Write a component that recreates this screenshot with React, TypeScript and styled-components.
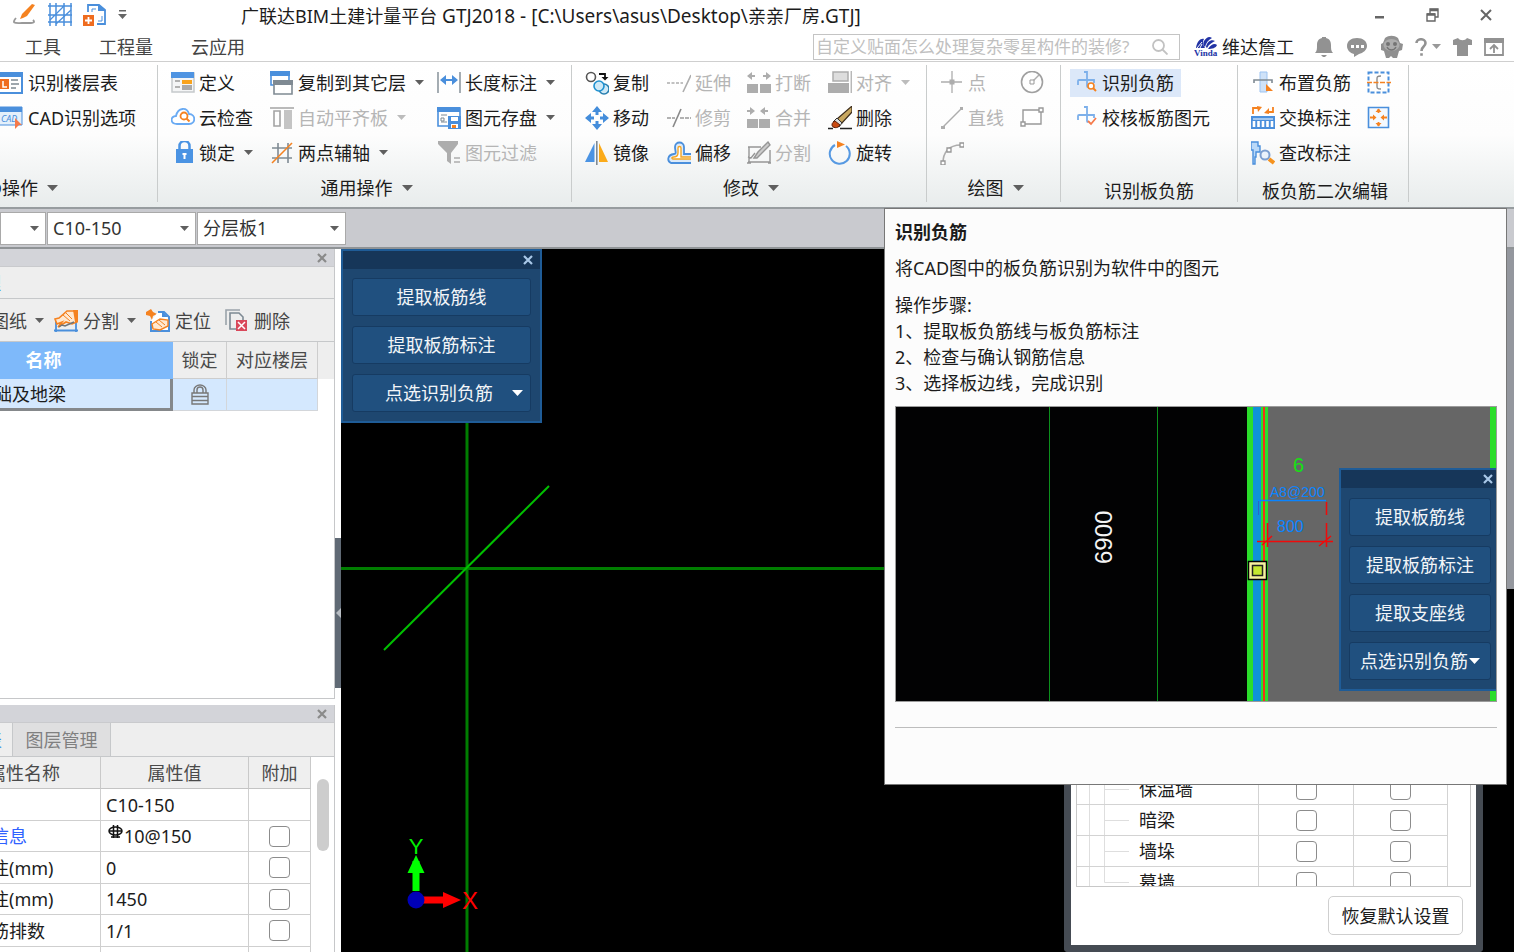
import React from 'react';
import styled, { createGlobalStyle, css } from 'styled-components';

const Global = createGlobalStyle`
  *, *::before, *::after { box-sizing: border-box; }
  body { margin: 0; background: #fff; }
  body, button, input, select, table {
    font-family: "Noto Sans", "Noto Sans CJK SC", sans-serif;
    font-size: 18px;
    line-height: 26px;
    color: #1c1c1c;
  }
  button { margin: 0; padding: 0; border: 0; background: none; white-space: nowrap; }
  svg { display: block; flex: none; }
`;

/* ---------- shared parts ---------- */

const Page = styled.div`
  position: relative;
  display: flex;
  flex-direction: column;
  height: 100vh;
  overflow: hidden;
`;

const CaretShape = styled.svg<{ $tone?: string }>`
  fill: ${p => p.$tone || '#5f5f5f'};
`;

const Caret = ({ tone, size = 9 }: { tone?: string; size?: number }) => (
  <CaretShape $tone={tone} width={size} height={size === 9 ? 5 : 6} viewBox="0 0 10 6" preserveAspectRatio="none">
    <path d="M0 0h10L5 6z" />
  </CaretShape>
);

const Checkbox = styled.input.attrs({ type: 'checkbox' })`
  appearance: none;
  display: block;
  width: 21px;
  height: 21px;
  margin: 0 auto;
  border: 1px solid #8c8c8c;
  border-radius: 4px;
  background: #fff;
`;

const Cross = ({ color = '#8a8a8a', size = 10 }: { color?: string; size?: number }) => (
  <svg width={size} height={size} viewBox="0 0 10 10" stroke={color} strokeWidth="2.2">
    <path d="M1 1l8 8M9 1L1 9" />
  </svg>
);

/* ---------- title bar ---------- */

const TitleBar = styled.header`
  display: flex;
  align-items: center;
  flex: none;
  height: 32px;
  padding: 0 22px 3px 0;
`;

const QuickAccess = styled.div`
  display: flex;
  align-items: center;
  gap: 11px;
  width: 241px;
  padding-left: 13px;
`;

const Title = styled.h1`
  margin: 2px 0 0;
  font-size: 18px;
  font-weight: 400;
  white-space: nowrap;
`;

const PathText = styled.span`
  font-size: 19px;
`;

const WindowButtons = styled.div`
  display: flex;
  align-items: center;
  gap: 41px;
  margin-left: auto;
`;

const MenuBar = styled.nav`
  display: flex;
  align-items: center;
  flex: none;
  height: 29px;
  padding: 0 10px 0 25px;
`;

const MenuLink = styled.a`
  margin-right: 38px;
  color: #444;
  text-decoration: none;
  white-space: nowrap;
`;

const SearchBox = styled.label`
  display: flex;
  align-items: center;
  width: 367px;
  height: 26px;
  margin-left: auto;
  padding: 0 11px 0 2px;
  border: 1px solid #c4c4c4;
`;

const SearchInput = styled.input`
  flex: 1;
  min-width: 0;
  padding: 0;
  border: 0;
  outline: 0;
  background: none;
  font-size: 17px;
  line-height: 22px;
  &::placeholder { color: #c0c0c0; opacity: 1; }
`;

const Account = styled.button`
  display: flex;
  align-items: center;
  gap: 4px;
  margin: 0 20px 0 14px;
`;

const StatusIcons = styled.div`
  display: flex;
  align-items: center;
  gap: 12px;
`;

const HelpButton = styled.button`
  display: flex;
  align-items: center;
  gap: 5px;
`;

/* ---------- ribbon ---------- */

const Ribbon = styled.section`
  display: flex;
  flex: none;
  height: 148px;
  padding-top: 3px;
  border-top: 1px solid #cfcfcf;
  border-bottom: 2px solid #979c9f;
  background: linear-gradient(#fff 0%, #fdfdfd 50%, #e8ecec 100%);
`;

const Group = styled.div<{ $inset?: number }>`
  display: flex;
  flex-direction: column;
  flex: none;
  margin-bottom: 5px;
  padding-left: ${p => p.$inset || 0}px;
  border-right: 1px solid #c9cccc;
  overflow: hidden;
`;

const Columns = styled.div`
  display: flex;
`;

const Column = styled.div<{ $width: number }>`
  width: ${p => p.$width}px;
  display: flex;
  flex-direction: column;
  align-items: flex-start;
`;

const Cell = styled.div`
  display: flex;
  align-items: center;
  height: 35px;
`;

const ToolButton = styled.button<{ $active?: boolean; $pad?: boolean }>`
  display: flex;
  align-items: center;
  gap: 4px;
  height: 28px;
  ${p => p.$pad && css`padding: 0 7px 0 4px;`}
  background: ${p => (p.$active ? '#dce8f9' : 'none')};
  &:disabled { color: #b5b5b5; }
  & > ${CaretShape} { margin-left: 5px; }
`;

const GroupLabel = styled.div<{ $low?: boolean; $start?: boolean }>`
  display: flex;
  align-items: center;
  justify-content: ${p => (p.$start ? 'flex-end' : 'center')};
  gap: 9px;
  width: 0;
  min-width: 100%;
  margin-top: ${p => (p.$low ? 8 : 5)}px;
  padding-right: ${p => (p.$start ? 99 : 9)}px;
  height: 26px;
  white-space: nowrap;
`;

/* ---------- component selector strip ---------- */

const SelectorStrip = styled.div`
  display: flex;
  align-items: center;
  gap: 1px;
  flex: none;
  height: 40px;
  border-bottom: 2px solid #8f9396;
  background: #c9cacf;
`;

const Combo = styled.label<{ $width: number }>`
  display: grid;
  grid-template-columns: 1fr 15px;
  align-items: center;
  width: ${p => p.$width}px;
  height: 33px;
  border: 1px solid #a9a9a9;
  background: #fff;
`;

const ComboSelect = styled.select`
  grid-area: 1 / 1 / 2 / 3;
  appearance: none;
  width: 100%;
  height: 31px;
  padding: 0 20px 0 5px;
  border: 0;
  background: none;
  color: #333;
`;

const ComboCaret = styled.span`
  grid-area: 1 / 2 / 2 / 3;
  pointer-events: none;
`;

/* ---------- workspace and docks ---------- */

const Workspace = styled.main`
  display: flex;
  flex: 1;
  min-height: 0;
`;

const Dock = styled.aside`
  display: flex;
  flex-direction: column;
  align-items: flex-end;
  gap: 6px;
  flex: none;
  width: 335px;
  overflow: hidden;
`;

const Panel = styled.section<{ $height?: number }>`
  display: flex;
  flex-direction: column;
  width: 420px;
  ${p => (p.$height ? css`flex: none; height: ${p.$height}px; border-bottom: 1px solid #c6c7c9;` : css`flex: 1; min-height: 0; overflow: hidden;`)}
  border-right: 1px solid #c6c7c9;
`;

const PanelBar = styled.div`
  display: flex;
  align-items: center;
  justify-content: flex-end;
  flex: none;
  height: 18px;
  padding-right: 7px;
  background: #d3d4d9;
  border-bottom: 1px solid #c9cacd;
`;

const TabRow = styled.div<{ $height: number }>`
  display: flex;
  flex: none;
  height: ${p => p.$height}px;
  background: #eee;
  border-bottom: 1px solid #c6c8ca;
`;

const Tab = styled.button<{ $on?: boolean; $width: number }>`
  width: ${p => p.$width}px;
  padding: ${p => (p.$on ? '0 10px 0 0' : '0')};
  text-align: ${p => (p.$on ? 'right' : 'center')};
  color: ${p => (p.$on ? '#3a8ee8' : '#808080')};
  background: ${p => (p.$on ? '#eee' : '#dfdfe0')};
  border-right: 1px solid #c6c8ca;
`;

const HeadTab = styled(Tab)`
  border-right: 0;
  padding-right: 0;
`;

const DrawingTools = styled.div`
  display: flex;
  align-items: center;
  flex: none;
  height: 43px;
  padding: 1px 0 0 76px;
  background: #eee;
  border-bottom: 1px solid #c6c8ca;
`;

const DrawingTool = styled.button<{ $after: number }>`
  display: flex;
  align-items: center;
  gap: 5px;
  margin-right: ${p => p.$after}px;
  color: #444;
  & > ${CaretShape} { margin-left: 3px; }
`;

const DataTable = styled.table`
  border-collapse: separate;
  border-spacing: 0;
  table-layout: fixed;
  th, td { padding: 0; white-space: nowrap; overflow: hidden; }
`;

const DrawingTable = styled(DataTable)`
  width: 419px;
  th {
    height: 37px;
    font-weight: 400;
    color: #4a4a4a;
    background: #eee;
    border-right: 1px solid #cdcdcd;
    border-bottom: 1px solid #cdcdcd;
  }
  th:first-child { background: #7eb9fa; color: #fff; font-weight: 700; border-color: #7eb9fa; }
  th:last-child { border: 0; }
  td { height: 32px; background: #d4e8fe; border-right: 1px solid #d3d6da; border-bottom: 1px solid #d3d6da; }
  td:first-child { padding-left: 61px; border-right: 3px solid #85888b; border-bottom: 3px solid #85888b; }
  td:last-child { background: #fff; border: 0; }
  td svg { margin: 0 auto; }
`;

const PropertyArea = styled.div`
  display: flex;
  flex: 1;
  min-height: 0;
`;

const PropertyTable = styled(DataTable)`
  width: 396px;
  align-self: flex-start;
  th {
    height: 32px;
    font-weight: 400;
    color: #4a4a4a;
    background: #efefef;
    border-right: 1px solid #c9c9c9;
    border-bottom: 1px solid #c4c4c4;
  }
  td { height: 32px; border-right: 1px solid #cfcfcf; border-bottom: 1px solid #cfcfcf; }
  tr:nth-child(even) td { height: 31px; }
  td:nth-child(2) { padding-left: 7px; }
  td:nth-child(3) { padding-left: 5px; }
`;

const Linked = styled.span`
  color: #2f62ff;
`;

const Rebar = styled.span`
  display: flex;
  align-items: flex-start;
  gap: 1px;
  height: 26px;
  padding-left: 2px;
`;

const ScrollThumb = styled.div`
  width: 12px;
  height: 72px;
  margin: 22px 0 0 6px;
  border-radius: 6px;
  background: #cdcdcd;
`;

const Gutter = styled.div`
  flex: none;
  width: 6px;
  padding-top: 289px;
`;

const CollapseHandle = styled.button`
  display: flex;
  align-items: center;
  justify-content: flex-end;
  width: 6px;
  height: 150px;
  background: #606a75;
`;

/* ---------- drawing canvas ---------- */

const Canvas = styled.div`
  position: relative;
  flex: 1;
  min-width: 0;
  background: #000;
  overflow: hidden;
`;

const Scene = styled.svg`
  width: 100%;
  height: 100%;
`;

const CommandPalette = styled.div<{ $docked?: boolean }>`
  position: absolute;
  ${p => (p.$docked
    ? css`top: 61px; right: 0; width: 157px;`
    : css`top: 0; left: 0; width: 201px;`)}
  border: 2px solid #1f5c97;
  ${p => p.$docked && css`border-right: 0;`}
  background: #1e4770;
`;

const PaletteBar = styled.div<{ $docked?: boolean }>`
  display: flex;
  align-items: center;
  justify-content: flex-end;
  height: 18px;
  padding-right: ${p => (p.$docked ? 3 : 7)}px;
  background: #163659;
`;

const PaletteList = styled.div<{ $docked?: boolean }>`
  display: flex;
  flex-direction: column;
  gap: 10px;
  padding: ${p => (p.$docked ? '10px 5px 9px 8px' : '9px')};
`;

const PaletteButton = styled.button<{ $gap: number }>`
  display: flex;
  align-items: center;
  justify-content: center;
  gap: ${p => p.$gap}px;
  height: 38px;
  border: 1px solid #163b62;
  border-radius: 3px;
  background: #20507f;
  color: #f2f5f8;
`;

const SideStrip = styled.div`
  position: absolute;
  top: 0;
  right: 0;
  width: 8px;
  height: 340px;
  background: #94979e;
`;

const OptionsDialog = styled.section`
  position: absolute;
  right: 31px;
  bottom: 0;
  width: 419px;
  padding: 5px;
  border: 7px solid #454b53;
  border-top: 0;
  border-radius: 0 0 4px 4px;
  background: #fff;
`;

const OptionsList = styled.div`
  width: 395px;
  height: 113px;
  border: 1px solid #c8c8c8;
  border-top: 0;
  overflow: hidden;
`;

const OptionsTable = styled(DataTable)`
  width: 371px;
  td { height: 31px; border-right: 1px solid #d3d3d3; border-bottom: 1px solid #d3d3d3; }
`;

const TreeName = styled.div`
  display: flex;
  align-items: center;
  gap: 10px;
  height: 30px;
  padding-left: 12px;
`;

const DialogActions = styled.div`
  display: flex;
  justify-content: flex-end;
  padding: 9px 8px 5px 0;
`;

const PlainButton = styled.button`
  width: 135px;
  height: 39px;
  border: 1px solid #cfcfcf;
  border-radius: 5px;
  background: #fff;
`;

/* ---------- ribbon tooltip ---------- */

const Tooltip = styled.aside`
  position: absolute;
  z-index: 5;
  top: 208px;
  right: 7px;
  width: 623px;
  height: 577px;
  padding: 10px 9px 0 10px;
  border: 1px solid #777;
  background: #fcfcfc;
`;

const TipTitle = styled.h2`
  margin: 0 0 10px;
  font-size: 18px;
  line-height: 26px;
`;

const TipText = styled.p`
  margin: 0 0 11px;
`;

const Steps = styled.div`
  margin-bottom: 10px;
`;

const Preview = styled.div`
  position: relative;
  height: 296px;
  border: 1px solid #9b9b9b;
`;

const TipRule = styled.hr`
  margin: 25px 0 0;
  border: 0;
  border-top: 1px solid #bdbdbd;
`;

/* ---------- icons ---------- */

const B = '#4a8fdc';
const O = '#f58220';
const G = '#7f8a93';
const D = '#adadad';

const glyphs: Record<string, React.ReactNode> = {
  floor: <><path d="M-2 2h24v20H-2z" fill="#fff" stroke={B} strokeWidth="2" /><path d="M-2 2h25v4H-2z" fill={B} /><path d="M-2 8h11v10H-2z" fill="#ef6c1f" /><path d="M3 10v6h4" stroke="#fff" strokeWidth="1.5" fill="none" /><path d="M11 9h7M11 13h8M11 17h5" stroke={G} strokeWidth="1.5" /></>,
  cad: <><path d="M-1 1h23v18H-1z" fill="#e4f0fb" stroke={B} /><path d="M-1 1h23v5H-1z" fill={B} /><text x="1" y="16" fontSize="9" fontStyle="italic" fill={B}>CAD</text><path d="M15 12l7 7h-3l-4 4z" fill="#f57a4b" /></>,
  define: <><path d="M1 2h22v19H1z" fill="#f4f5f6" stroke="#c5c9cc" strokeWidth="1.5" /><path d="M0 1h23v6H0z" fill="#4f94e2" /><path d="M4 10h5M4 16h5" stroke="#9b9b9b" strokeWidth="1.3" /><path d="M11 9h10v4H11z" fill="#f9a31c" /><path d="M11 14h10v5H11z" fill="#aaa" /></>,
  cloud: <><path d="M6 18C-1 18-1 10 5 10 7 1 16 1 18 8c7 0 7 10 0 10z" fill="#fff" stroke="#69aaf3" strokeWidth="1.8" /><circle cx="13" cy="10" r="3.5" fill="none" stroke={O} strokeWidth="1.8" /><path d="M15.500 12.500l3 3" stroke={O} strokeWidth="2" /></>,
  lock: <><path d="M9 10V7a5 5 0 0 1 10 0v3" transform="translate(-.5 -2)" fill="none" stroke="#4a93e3" strokeWidth="2.500" /><path d="M5 8h17v14H5z" fill="#4a93e3" /><path d="M13.500 12v6M11.500 13h4" stroke="#fff" strokeWidth="2" /></>,
  copyfloor: <><path d="M1 1h18v13H1z" fill="#fff" stroke={B} strokeWidth="1.6" /><path d="M0 0h20v5H0z" fill={B} /><path d="M4 10h18v13H4z" fill="#fff" stroke={G} strokeWidth="1.6" /><path d="M3 9h20v5H3z" fill={G} /></>,
  slab: <><path d="M0 2h24" stroke="#a3a3a3" strokeWidth="1.5" /><path d="M4 5h6v15H4z" fill="none" stroke="#a3a3a3" strokeWidth="1.6" /><path d="M14 4h8v19h-8z" fill="#c4c4c4" /></>,
  axis: <><path d="M8 2v20M18 2v20M2 7h20M2 17h20" stroke={G} strokeWidth="1.6" /><path d="M2 22L22 2" stroke={O} strokeWidth="1.6" /></>,
  length: <><path d="M1 1v21M23 1v21" stroke={G} strokeWidth="1.4" /><path d="M5 9h14" stroke={B} strokeWidth="2" /><path d="M3 9l6-5v10zM21 9l-6-5v10z" fill={B} /></>,
  store: <><path d="M1 2h22v18H1z" fill="#fff" stroke={B} strokeWidth="1.6" /><path d="M0 1h23v5H0z" fill={B} /><path d="M4 9h6M4 16h6M4 12h3v3H4z" stroke={G} fill="none" /><path d="M11 10h13v13H11z" fill={B} /><path d="M14 11h7v4h-7z" fill="#fff" /><path d="M14 18h7v4h-7z" fill="#fff" /><path d="M15 19h4v3h-4z" fill={O} /></>,
  filter: <><path d="M1 0h20v3l-7 9v11l-4-3v-8L1 3z" fill={D} /><path d="M17 17h6M17 21h6" stroke={D} strokeWidth="1.5" /></>,
  copy: <><circle cx="6" cy="6" r="4.500" fill="#fff" stroke="#555" strokeWidth="1.6" /><path d="M14 3h6v4" stroke="#111" strokeWidth="1.8" fill="none" /><path d="M16.500 6h7L20 9.500z" fill="#111" /><circle cx="19" cy="18" r="5" fill="#cfe9f6" stroke="#287fb0" strokeWidth="1.6" /><circle cx="14" cy="15" r="5" fill="#cfe9f6" stroke="#1f91d0" strokeWidth="1.6" /></>,
  move: <g fill="#448ddb"><path d="M12 0l5 6h-3.500v3h-3V6H7zM12 24l5-6h-3.500v-3h-3v3H7zM0 12l6-5v3.500h3v3H6V17zM24 12l-6-5v3.500h-3v3h3V17z" /></g>,
  mirror: <><path d="M9.500 2v19H0z" fill="#4a93e3" /><path d="M14 2v19h9z" fill="#fbab1a" /><path d="M11.800 0v24" stroke={G} strokeWidth="1.6" /></>,
  extend: <><path d="M0 12h16" stroke={D} strokeWidth="1.6" strokeDasharray="3 1.500" /><path d="M24 4l-8 17" stroke={D} strokeWidth="1.6" /></>,
  trim: <><path d="M0 12h8M13 12h11" stroke="#999" strokeWidth="1.6" strokeDasharray="4 1" /><path d="M14 3L6 21" stroke="#888" strokeWidth="1.6" /></>,
  offset: <><path d="M24 22H4c-4-2-4-8 3-9 3 0 1-3 1-7 0-6 9-6 9 0v7h7" fill="#dceaf9" stroke={B} strokeWidth="1.8" /><path d="M24 18H6c-2-1-1-2 1-2 5 0 4-5 4-9 0-2 3-2 3 0v9h10" fill="#fff" stroke="#f5a623" strokeWidth="1.4" /></>,
  breakup: <g fill={D}><path d="M0 13h11v9H0zM13 13h11v9H13zM0 5l5-4v3h3v2H5v3zM24 5l-5-4v3h-3v2h3v3z" /></g>,
  merge: <g fill={D}><path d="M0 13h11v9H0zM12 13h11v9H12zM8 5L3 1v3H0v2h3v3zM13 5l5-4v3h3v2h-3v3z" /></g>,
  split: <g stroke="#969696" strokeWidth="1.4" fill="none"><path d="M1 21h22V9M1 6h13M2 6v15M1 16l3 1 4-5M0 22h4M21 22h3" /><path d="M7 17l4-6L21 1l2 3-10 10-3 3z" fill="#ccc" /></g>,
  align: <><path d="M5 1h15v9H5z" fill="#ddd" stroke={D} strokeWidth="1.5" /><path d="M0 12h21v10H0z" fill={D} /><path d="M23.200 0v22" stroke="#999" /></>,
  erase: <><path d="M0 22.500h5M12 22.500h12" stroke="#222" strokeWidth="1.6" /><path d="M24 0v6L14 17l-5-4z" fill="#c9a860" stroke="#3c2c1c" strokeWidth="1.2" /><path d="M9 12l5 5-3 4-6-5z" fill="#ddd" stroke="#333" /><path d="M7 15l5 4c-2 4-8 3-8 0 0-2 1-3 3-4z" fill="#c94a12" stroke="#5b1e08" /></>,
  rotate: <><path d="M7 4a10 10 0 1 0 11 1" fill="none" stroke="#5699e2" strokeWidth="2" /><path d="M9 0l8 3.500L9 7z" fill={O} /></>,
  point: <><path d="M12 0v22M1 11h21" stroke={D} strokeWidth="1.3" /><path d="M9.500 8.500h5v5h-5z" fill={D} /></>,
  line: <><path d="M3 21L21 3" stroke={D} strokeWidth="1.4" /><path d="M1 20h4v3H1zM20 1h3v3h-3z" fill={D} /></>,
  arc: <><path d="M3 22C3 12 8 4 21 4" fill="none" stroke={D} strokeWidth="1.6" /><g fill="#fff" stroke="#969696" strokeWidth="1.3"><path d="M1 20h4v4H1zM7 7h4v4H7zM20 2h4v4h-4z" /></g></>,
  circle: <><circle cx="12" cy="11" r="10.500" fill="none" stroke="#a0a0a0" strokeWidth="1.6" /><path d="M12 11l7-7" stroke={D} strokeWidth="1.4" /><path d="M10 9h4v4h-4z" fill="#fff" stroke="#999" /></>,
  rect: <g fill="#fff" stroke="#999" strokeWidth="1.4"><path d="M3 4h18v14H3z" /><path d="M1 16h4v4H1zM19 2h4v4h-4z" /></g>,
  identify: <><path d="M4 14v-4q0-1 1-1h15v3M10 1h3v14q0 1 1 1h2" fill="none" stroke="#7db0ea" strokeWidth="1.8" /><circle cx="17" cy="15" r="3" fill="#fff" stroke={O} strokeWidth="1.6" /><path d="M19 17l3 3" stroke={O} strokeWidth="2" /></>,
  check: <><path d="M4 14v-4q0-1 1-1h15v3M10 1h3v14q0 1 1 1" fill="none" stroke="#7db0ea" strokeWidth="1.8" /><path d="M14 15l3 3 5-6" fill="none" stroke="#f57a4b" strokeWidth="1.8" /></>,
  place: <><path d="M9 1h7v20H9z" fill="#cfe2f8" stroke="#9cc3f1" /><path d="M3 12V9h18v3" fill="none" stroke={G} strokeWidth="1.6" /><path d="M15 13l7 7h-7z" fill={O} /></>,
  swap: <><path d="M0 10h24v13H0z" fill={B} /><path d="M2 13h20" stroke="#fff" strokeWidth="1" /><path d="M3 15v6M7.500 15v6M12 15v6M16.500 15v6M21 15v6" stroke="#fff" strokeWidth="2.600" /><path d="M2 8V2h5M22 1v5h-5" fill="none" stroke={O} strokeWidth="1.8" /><path d="M6 0l5 1-4 5zM18 2v6l-5-1z" fill={O} /></>,
  inspect: <><path d="M0 1h7v4h2v6H5v5H4v7H2V9H0z" fill="#b9d8f8" stroke={B} strokeWidth="1.4" /><circle cx="14" cy="14" r="4.500" fill="#eaf2fc" stroke="#7d9fd0" strokeWidth="2" /><path d="M18 18l5 4" stroke="#f5921e" strokeWidth="4" /></>,
  bar: <><path d="M1.500 1.500h20v20h-20z" fill="none" stroke={B} strokeWidth="2" strokeDasharray="4 2" /><path d="M14 5c-4 0-4 1-4 3v7c0 2 0 3 4 3" fill="none" stroke="#8c8c8c" strokeWidth="1.4" /><path d="M0 11.500h24" stroke={O} strokeWidth="1.6" strokeDasharray="5 1.500" /></>,
  expand: <><path d="M1.500 1.500h20v20h-20z" fill="#f4f9ff" stroke={B} strokeWidth="1.600" /><path d="M11.500 3v4M11.500 16v4M3 11.500h4M16 11.500h4" stroke={O} strokeWidth="1.800" /><path d="M11.500 2.500l3 3.500h-6zM11.500 20.500l3-3.500h-6zM6 8.500v6l3.500-3zM17 8.500v6l-3.500-3z" fill={O} /></>,
  sheetsplit: <><path d="M2 11v12M0 21.500h24M22 11v12" stroke={B} strokeWidth="1.800" fill="none" /><path d="M1 10l4-1 8-7h10v11l-5 2-6-2-8 5 4-5-5 2z" fill="#ffe9d2" stroke={O} strokeWidth="1.6" /><path d="M19 1h5v12h-3z" fill={O} /><path d="M9 6l7 6M12 4l6 6" stroke={O} /><path d="M5 18l3-2 3 1 9-4" stroke="#6d757b" strokeWidth="1.400" fill="none" /></>,
  locate: <><path d="M0 3l5-3 2 3 4 2-4 2-1 4-2-4-4-1z" fill={O} /><path d="M12 3h6l5 5v14H5V12" fill="#fff" stroke={B} strokeWidth="2" /><path d="M16 2l6 6h-6z" fill={B} /><path d="M6 15l8-5 8 1v6l-8 4-7-1z" fill="#ffe9d2" stroke={O} strokeWidth="1.4" /><path d="M10 13l6 5M13 11l6 5" stroke={O} /></>,
  remove: <><path d="M1 16V1h14" fill="none" stroke="#9aa3aa" strokeWidth="1.6" /><path d="M11 20H5V4h9l4 4v3" fill="none" stroke="#7e8a94" strokeWidth="1.6" /><path d="M11 11h11v11H11z" fill="#d9485a" /><path d="M13 13l7 7M20 13l-7 7" stroke="#fff" strokeWidth="1.5" /></>,
  brush: <><path d="M24 1l-8 11-4 2-3 1 2-5L21 0z" transform="translate(-2 1)" fill={O} /><path d="M3 16c-5 6 0 5 6 5h9c3 0 4-1 2-3" fill="none" stroke="#999" strokeWidth="1.8" transform="translate(0 -1)" /></>,
  grid: <g fill="none" stroke={B} strokeWidth="1.8"><path d="M2 0v23M8 0v23M16 0v23M23 0v23" strokeWidth="1.5" /><path d="M0 3h24M0 12h24M0 19h24M2 17L16 3M8 21L23 7" strokeWidth="1.3" /></g>,
  newdoc: <><path d="M5 9V2h11l6 5v14h-8" fill="#fff" stroke={B} strokeWidth="1.8" /><path d="M15 1l8 7h-8z" fill={B} /><path d="M9 9V6h4M19 13v5h-4" stroke={B} fill="none" /><path d="M0 12h11v11H0z" fill="#ef6c1f" /><path d="M5.500 14v7M2 17.500h7" stroke="#fff" strokeWidth="1.8" /></>,
};

const Icon = ({ name }: { name: string }) => (
  <svg width="24" height="24" viewBox="0 0 24 24" aria-hidden="true">{glyphs[name]}</svg>
);

/* ---------- ribbon content ---------- */

type Tool = { icon: string; text?: string; off?: boolean; menu?: boolean; active?: boolean; label?: string };
type GroupSpec = { label: string; menu?: boolean; low?: boolean; start?: boolean; inset: number; padded?: boolean; columns: { width: number; tools: Tool[] }[] };

const groups: GroupSpec[] = [
  {
    label: 'D操作', menu: true, start: true, inset: 0,
    columns: [{ width: 157, tools: [{ icon: 'floor', text: '识别楼层表' }, { icon: 'cad', text: 'CAD识别选项' }] }],
  },
  {
    label: '通用操作', menu: true, inset: 13,
    columns: [
      { width: 99, tools: [{ icon: 'define', text: '定义' }, { icon: 'cloud', text: '云检查' }, { icon: 'lock', text: '锁定', menu: true }] },
      { width: 167, tools: [{ icon: 'copyfloor', text: '复制到其它层', menu: true }, { icon: 'slab', text: '自动平齐板', menu: true, off: true }, { icon: 'axis', text: '两点辅轴', menu: true }] },
      { width: 134, tools: [{ icon: 'length', text: '长度标注', menu: true }, { icon: 'store', text: '图元存盘', menu: true }, { icon: 'filter', text: '图元过滤', off: true }] },
    ],
  },
  {
    label: '修改', menu: true, inset: 13,
    columns: [
      { width: 82, tools: [{ icon: 'copy', text: '复制' }, { icon: 'move', text: '移动' }, { icon: 'mirror', text: '镜像' }] },
      { width: 80, tools: [{ icon: 'extend', text: '延伸', off: true }, { icon: 'trim', text: '修剪', off: true }, { icon: 'offset', text: '偏移' }] },
      { width: 81, tools: [{ icon: 'breakup', text: '打断', off: true }, { icon: 'merge', text: '合并', off: true }, { icon: 'split', text: '分割', off: true }] },
      { width: 98, tools: [{ icon: 'align', text: '对齐', off: true, menu: true }, { icon: 'erase', text: '删除' }, { icon: 'rotate', text: '旋转' }] },
    ],
  },
  {
    label: '绘图', menu: true, inset: 13,
    columns: [
      { width: 80, tools: [{ icon: 'point', text: '点', off: true }, { icon: 'line', text: '直线', off: true }, { icon: 'arc', label: '弧', off: true }] },
      { width: 40, tools: [{ icon: 'circle', label: '圆', off: true }, { icon: 'rect', label: '矩形', off: true }] },
    ],
  },
  {
    label: '识别板负筋', low: true, inset: 9, padded: true,
    columns: [{ width: 167, tools: [{ icon: 'identify', text: '识别负筋', active: true }, { icon: 'check', text: '校核板筋图元' }] }],
  },
  {
    label: '板负筋二次编辑', low: true, inset: 13,
    columns: [
      { width: 116, tools: [{ icon: 'place', text: '布置负筋' }, { icon: 'swap', text: '交换标注' }, { icon: 'inspect', text: '查改标注' }] },
      { width: 41, tools: [{ icon: 'bar', label: '负筋范围' }, { icon: 'expand', label: '展开' }] },
    ],
  },
];

const RibbonGroup = ({ spec }: { spec: GroupSpec }) => {
  const rows = [0, 1, 2];
  return (
    <Group $inset={spec.inset}>
      <Columns>
        {spec.columns.map((col, i) => (
          <Column key={i} $width={col.width}>
            {rows.map(r => {
              const tool = col.tools[r];
              return (
                <Cell key={r}>
                  {tool && (
                    <ToolButton type="button" disabled={tool.off} $active={tool.active} $pad={spec.padded} aria-label={tool.label}>
                      <Icon name={tool.icon} />
                      {tool.text}
                      {tool.menu && <Caret tone={tool.off ? '#bcbcbc' : undefined} />}
                    </ToolButton>
                  )}
                </Cell>
              );
            })}
          </Column>
        ))}
      </Columns>
      <GroupLabel $low={spec.low} $start={spec.start}>
        {spec.label}
        {spec.menu && <Caret size={11} />}
      </GroupLabel>
    </Group>
  );
};

const Palette = ({ items, docked }: { items: string[]; docked?: boolean }) => (
  <CommandPalette $docked={docked}>
    <PaletteBar $docked={docked}>
      <button type="button" aria-label="关闭"><Cross color="#a9c8e8" /></button>
    </PaletteBar>
    <PaletteList $docked={docked}>
      {items.map((item, i) => {
        const menu = i === items.length - 1;
        return (
          <PaletteButton key={item} type="button" $gap={docked ? 1 : 19}>
            {menu && !docked && <svg width="6" height="1" />}
            {item}
            {menu && <Caret tone="#fff" size={11} />}
          </PaletteButton>
        );
      })}
    </PaletteList>
  </CommandPalette>
);

const properties = [
  { name: '', value: 'C10-150', check: false },
  { name: '钢筋信息', value: '10@150', check: true, linked: true },
  { name: '左标注(mm)', value: '0', check: true },
  { name: '右标注(mm)', value: '1450', check: true },
  { name: '马凳筋排数', value: '1/1', check: true },
  { name: '', value: '', check: true },
];

const RebarMark = () => (
  <svg width="15" height="17" viewBox="0 0 15 17" fill="none" stroke="#111" strokeWidth="1.500">
    <ellipse cx="7.500" cy="8" rx="6.500" ry="4" />
    <path d="M5.500 2v13M9.500 2v13M1 8h13M3 14h9" />
  </svg>
);

export default function App() {
  return (
    <Page>
      <Global />
      <TitleBar>
        <QuickAccess>
          <button type="button" aria-label="格式刷"><Icon name="brush" /></button>
          <button type="button" aria-label="轴网"><Icon name="grid" /></button>
          <button type="button" aria-label="新建"><Icon name="newdoc" /></button>
          <button type="button" aria-label="更多">
            <svg width="9" height="10" viewBox="0 0 9 10" fill="#666"><path d="M1 0h7v1.600H1zM0 4h9L4.500 9z" /></svg>
          </button>
        </QuickAccess>
        <Title>
          广联达BIM土建计量平台
          <PathText>{' GTJ2018 - [C:\\Users\\asus\\Desktop\\'}</PathText>
          亲亲厂房
          <PathText>.GTJ]</PathText>
        </Title>
        <WindowButtons>
          <button type="button" aria-label="最小化"><svg width="10" height="12" viewBox="0 0 10 12"><path d="M0 7h9v2.500H0z" fill="#666" /></svg></button>
          <button type="button" aria-label="还原">
            <svg width="13" height="14" viewBox="0 0 13 14" fill="none" stroke="#666" strokeWidth="1.400"><path d="M1 6h8v7H1zM4 6V1h8v8H9" /><path d="M1 6.500h8M4 2h8" strokeWidth="2.400" /></svg>
          </button>
          <button type="button" aria-label="关闭"><svg width="12" height="12" viewBox="0 0 12 12" stroke="#666" strokeWidth="2"><path d="M1 1l10 10M11 1L1 11" /></svg></button>
        </WindowButtons>
      </TitleBar>
      <MenuBar>
        <MenuLink href="#tools">工具</MenuLink>
        <MenuLink href="#quantity">工程量</MenuLink>
        <MenuLink href="#cloud">云应用</MenuLink>
        <SearchBox>
          <SearchInput aria-label="搜索" placeholder="自定义贴面怎么处理复杂零星构件的装修?" />
          <svg width="16" height="16" viewBox="0 0 16 16" fill="none" stroke="#c2c2c2" strokeWidth="1.800"><circle cx="6.500" cy="6.500" r="5.500" /><path d="M10.500 10.500l5 5" /></svg>
        </SearchBox>
        <Account type="button">
          <svg width="24" height="20" viewBox="0 0 24 20" fill="#2233a5">
            <path d="M2 11C3 4 7 1 10 2 8 5 9 8 11 11zM10 4c3-4 5-5 8-3-4 2-6 5-7 9-2-2-2-4-1-6zM12 10c1-5 5-8 9-6-2 1-6 3-8 7zM14 12c3-5 7-6 9-4-1 3-5 4-9 4z" />
            <path d="M3 11l5-6M6 11l2-4" stroke="#fff" />
            <text x="0" y="19" fontFamily="Liberation Serif" fontWeight="700" fontSize="9">Vinda</text>
          </svg>
          维达詹工
        </Account>
        <StatusIcons>
          <button type="button" aria-label="通知"><svg width="20" height="22" viewBox="0 0 20 22" fill="#929292"><path d="M8 1h4v1c4 1 5 4 5 7 0 4 0 6 2 8H1c2-2 2-4 2-8 0-3 1-6 5-7zM7 19h6l-2 2H9z" /></svg></button>
          <button type="button" aria-label="消息"><svg width="22" height="20" viewBox="0 0 22 20"><path d="M11 1c6 0 10 3 10 8 0 4-4 7-8 8l-5 3v-3c-4-1-7-4-7-8 0-5 4-8 10-8z" fill="#929292" /><path d="M5 8h3v3H5zM10 8h3v3h-3zM15 8h3v3h-3z" fill="#fff" /></svg></button>
          <button type="button" aria-label="助手"><svg width="23" height="24" viewBox="0 0 23 24"><path d="M5 3c4-3 9-3 13 0l2 5 3 1-1 6-3 1-2 7h-4l-2-2-2 2H6l-2-7-3-1V9l2-1z" fill="#909090" /><ellipse cx="11.500" cy="10" rx="8" ry="6" fill="#adadad" /><circle cx="8" cy="9" r="2" fill="#747474" /><circle cx="15" cy="9" r="2" fill="#747474" /><path d="M7 12c2 4 7 4 9 0" fill="none" stroke="#747474" strokeWidth="1.400" /></svg></button>
          <HelpButton type="button" aria-label="帮助">
            <svg width="12" height="18" viewBox="0 0 12 18" fill="none" stroke="#929292" strokeWidth="2.600"><path d="M1.500 5c0-5 9-5 9 0 0 4-4 3-4 8M5.200 16.500h2.600" /></svg>
            <Caret tone="#999" />
          </HelpButton>
          <button type="button" aria-label="皮肤"><svg width="19" height="18" viewBox="0 0 19 18" fill="#929292"><path d="M5 0c2 3 7 3 9 0l5 2v5h-4v11H4V7H0V2z" /></svg></button>
          <button type="button" aria-label="收起功能区"><svg width="20" height="18" viewBox="0 0 20 18"><path d="M1 1h18v16H1z" fill="#fff" stroke="#929292" strokeWidth="1.800" /><path d="M0 0h20v5H0z" fill="#929292" /><path d="M10 15V8M6 11l4-4 4 4" fill="none" stroke="#929292" strokeWidth="1.800" /></svg></button>
        </StatusIcons>
      </MenuBar>

      <Ribbon>
        {groups.map(g => <RibbonGroup key={g.label} spec={g} />)}
      </Ribbon>

      <SelectorStrip>
        <Combo $width={46}>
          <ComboSelect aria-label="楼层"><option></option></ComboSelect>
          <ComboCaret><Caret /></ComboCaret>
        </Combo>
        <Combo $width={149}>
          <ComboSelect aria-label="构件"><option>C10-150</option></ComboSelect>
          <ComboCaret><Caret /></ComboCaret>
        </Combo>
        <Combo $width={149}>
          <ComboSelect aria-label="分层"><option>分层板1</option></ComboSelect>
          <ComboCaret><Caret /></ComboCaret>
        </Combo>
      </SelectorStrip>

      <Workspace>
        <Dock>
          <Panel $height={450}>
            <PanelBar><button type="button" aria-label="关闭"><Cross /></button></PanelBar>
            <TabRow $height={32}><HeadTab type="button" $on $width={86}>理</HeadTab></TabRow>
            <DrawingTools>
              <DrawingTool type="button" $after={10}>图纸<Caret /></DrawingTool>
              <DrawingTool type="button" $after={10}><Icon name="sheetsplit" />分割<Caret /></DrawingTool>
              <DrawingTool type="button" $after={14}><Icon name="locate" />定位</DrawingTool>
              <DrawingTool type="button" $after={0}><Icon name="remove" />删除</DrawingTool>
            </DrawingTools>
            <DrawingTable>
              <colgroup><col width="258" /><col width="54" /><col width="91" /><col width="16" /></colgroup>
              <thead><tr><th>名称</th><th>锁定</th><th>对应楼层</th><th /></tr></thead>
              <tbody>
                <tr>
                  <td>基础及地梁</td>
                  <td>
                    <svg width="18" height="21" viewBox="0 0 18 21" fill="none" stroke="#777" strokeWidth="1.400">
                      <path d="M3 9V6a6 5 0 0 1 12 0v3M6 9V6a3 3 0 0 1 6 0v3M1 9h16v11H1zM1 12.500h16M1 16.500h16" />
                    </svg>
                  </td>
                  <td /><td />
                </tr>
              </tbody>
            </DrawingTable>
          </Panel>
          <Panel>
            <PanelBar><button type="button" aria-label="关闭"><Cross /></button></PanelBar>
            <TabRow $height={34}>
              <Tab type="button" $on $width={98}>表</Tab>
              <Tab type="button" $width={98}>图层管理</Tab>
            </TabRow>
            <PropertyArea>
              <PropertyTable>
                <colgroup><col width="33" /><col width="153" /><col width="148" /><col width="62" /></colgroup>
                <thead><tr><th /><th>属性名称</th><th>属性值</th><th>附加</th></tr></thead>
                <tbody>
                  {properties.map((p, i) => (
                    <tr key={i}>
                      <td />
                      <td>{p.linked ? <Linked>{p.name}</Linked> : p.name}</td>
                      <td>{p.linked ? <Rebar><RebarMark />{p.value}</Rebar> : p.value}</td>
                      <td>{p.check && <Checkbox aria-label={'附加 ' + p.name} />}</td>
                    </tr>
                  ))}
                </tbody>
              </PropertyTable>
              <ScrollThumb />
            </PropertyArea>
          </Panel>
        </Dock>
        <Gutter>
          <CollapseHandle type="button" aria-label="收起面板">
            <svg width="5" height="10" viewBox="0 0 5 10" fill="#b9bec4"><path d="M5 0v10L0 5z" /></svg>
          </CollapseHandle>
        </Gutter>

        <Canvas>
          <Scene>
            <path d="M126 0v2000M0 319.500h3000" stroke="#007d00" strokeWidth="3" fill="none" />
            <path d="M43 401L208 237" stroke="#00c000" strokeWidth="2" />
            <path d="M75 642v-30" stroke="#00ff00" strokeWidth="7" />
            <path d="M75 606l8.500 18h-17z" fill="#00ff00" />
            <path d="M82 651h22" stroke="#ff0000" strokeWidth="7" />
            <path d="M120 651l-18-8v16z" fill="#ff0000" />
            <circle cx="75" cy="651" r="8.500" fill="#0000b8" />
            <text x="75" y="605" textAnchor="middle" fontFamily="Liberation Sans" fontSize="22" fill="#00f000">Y</text>
            <text x="129" y="660" textAnchor="middle" fontFamily="Liberation Sans" fontSize="24" fill="#ff0000">X</text>
          </Scene>
          <Palette items={['提取板筋线', '提取板筋标注', '点选识别负筋']} />
          <SideStrip />
          <OptionsDialog>
            <OptionsList>
              <OptionsTable>
                <colgroup><col width="182" /><col width="95" /><col width="94" /></colgroup>
                <tbody>
                  {['保温墙', '暗梁', '墙垛', '幕墙'].map((name, i) => (
                    <tr key={name}>
                      <td>
                        <TreeName>
                          <svg width="40" height="31" viewBox="0 0 40 31" stroke="#dedede" fill="none">
                            <path d={i === 3 ? 'M.5 0v31M15.500 0v15.500H40' : 'M.5 0v31M15.500 0v31M15.500 15.500H40'} />
                          </svg>
                          {name}
                        </TreeName>
                      </td>
                      <td><Checkbox aria-label={name + ' 显示'} /></td>
                      <td><Checkbox aria-label={name + ' 名称'} /></td>
                    </tr>
                  ))}
                </tbody>
              </OptionsTable>
            </OptionsList>
            <DialogActions><PlainButton type="button">恢复默认设置</PlainButton></DialogActions>
          </OptionsDialog>
        </Canvas>
      </Workspace>

      <Tooltip role="tooltip">
        <TipTitle>识别负筋</TipTitle>
        <TipText>将CAD图中的板负筋识别为软件中的图元</TipText>
        <Steps>
          <div>操作步骤:</div>
          <div>1、提取板负筋线与板负筋标注</div>
          <div>2、检查与确认钢筋信息</div>
          <div>3、选择板边线，完成识别</div>
        </Steps>
        <Preview>
          <svg width="100%" height="294" viewBox="0 0 600 294" preserveAspectRatio="xMinYMin slice">
            <path d="M0 0h351v294H0z" fill="#020203" />
            <path d="M153 0h1v294h-1zM261 0h1v294h-1z" fill="#0c8f1c" />
            <path d="M351 0h21v294h-21zM594 0h6v294h-6z" fill="#2bdd2b" />
            <path d="M357 0h8v294h-8z" fill="#0f92d8" />
            <path d="M368 0v294" stroke="#f0321a" strokeWidth="2" />
            <path d="M372 0h222v294H372z" fill="#666" />
            <text transform="translate(216 157) rotate(-90)" fontFamily="Liberation Sans" fontSize="24" fill="#f4f4f4">6900</text>
            <g fontFamily="Liberation Sans" fill="#0a84ff">
              <text x="397" y="65" fontSize="20" fill="#14e014">6</text>
              <text x="374" y="90" fontSize="14">A8@200</text>
              <text x="381" y="125" fontSize="16">800</text>
            </g>
            <path d="M362 93.500h68" stroke="#0a84ff" strokeWidth="1.500" />
            <path d="M362.500 94v14" stroke="#2a62c8" />
            <path d="M430.500 95v13M430.500 116v24M371.500 116v24M361 134.500h76M423 139l12-10M366 138l10-9" stroke="#f00a0a" strokeWidth="1.500" fill="none" />
            <path d="M352.500 154.500h18v18h-18z" fill="#f7f2a0" stroke="#000" strokeWidth="1.500" />
            <path d="M356.500 158.500h10v10h-10z" fill="#c4e830" stroke="#222" strokeWidth="1.500" />
          </svg>
          <Palette docked items={['提取板筋线', '提取板筋标注', '提取支座线', '点选识别负筋']} />
        </Preview>
        <TipRule />
      </Tooltip>
    </Page>
  );
}
